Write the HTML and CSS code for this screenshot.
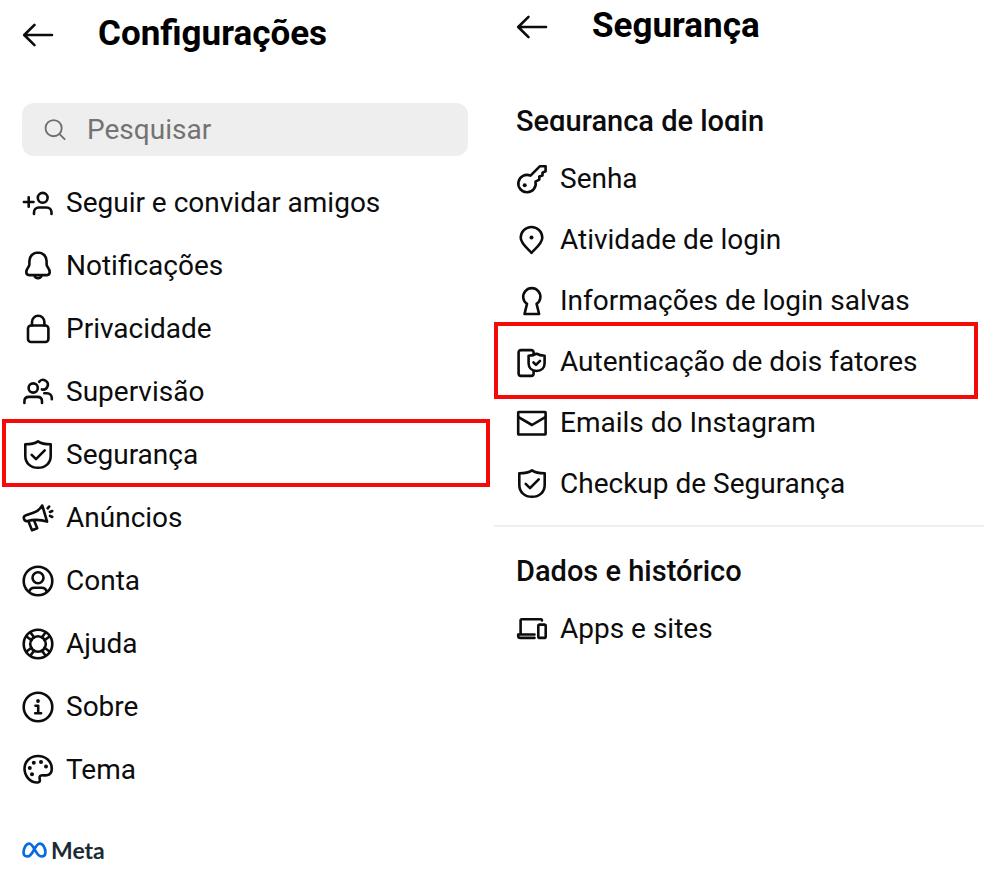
FILE: index.html
```
<!DOCTYPE html>
<html lang="pt-BR">
<head>
  <meta charset="utf-8">
  <meta name="viewport" content="width=device-width">
  <title>Configurações</title>
  <link rel="stylesheet" href="styles.css">
</head>
<body>
  <main class="screens">
    <section class="screen settings">
      <header class="screen-header">
        <button class="back" type="button" aria-label="Voltar">
          <svg class="icon" viewBox="0 0 32 32"><path d="M30 17H2.5M12.5 6.8L2.2 17l10.3 10.2"/></svg>
        </button>
        <h1>Configurações</h1>
      </header>

      <label class="search">
        <svg class="search-icon" viewBox="0 0 24 24"><circle cx="10.5" cy="10" r="8.8"/><path d="M17 16.5l5.500 5.500"/></svg>
        <input type="search" placeholder="Pesquisar" aria-label="Pesquisar">
      </label>

      <ul class="menu">
        <li><a href="#seguir">
          <svg class="icon" viewBox="0 0 32 32"><path d="M6.7 10.2v9.6M1.900 15h9.600"/><circle cx="20.7" cy="10.8" r="4.9"/><path d="M12 27v-1.500c0-3 2-5 5-5h7.500c3 0 5 2 5 5V27"/></svg>
          Seguir e convidar amigos
        </a></li>
        <li><a href="#notificacoes">
          <svg class="icon" viewBox="0 0 32 32"><path d="M16 2.500c-5 0-8.600 3.800-8.600 8.500v3.500c0 2.500-3.100 4-3.100 7.600 0 2 1 3 2.800 3h17.800c1.800 0 2.800-1 2.800-3 0-3.600-3.100-5.100-3.100-7.600V11c0-4.700-3.600-8.500-8.600-8.500z"/><path d="M12.500 25.500a3.600 3.600 0 0 0 7 0"/></svg>
          Notificações
        </a></li>
        <li><a href="#privacidade">
          <svg class="icon" viewBox="0 0 32 32"><rect x="6" y="12.5" width="20.4" height="16.5" rx="3"/><path d="M10 12.500V9a6.200 6.200 0 0 1 12.400 0v3.500"/></svg>
          Privacidade
        </a></li>
        <li><a href="#supervisao">
          <svg class="icon" viewBox="0 0 32 32"><circle cx="11.2" cy="12" r="4.6"/><path d="M2.400 27v-1.500c0-2.800 1.800-4.600 4.600-4.600h8.400c2.800 0 4.600 1.800 4.600 4.600V27M17.200 5.800a4.800 4.800 0 1 1 2.700 7.600M22.300 17.300H25c2.800 0 4.800 2 4.800 4.800v1.200"/></svg>
          Supervisão
        </a></li>
        <li class="highlight"><a href="#seguranca">
          <svg class="icon" viewBox="0 0 32 32"><path d="M16 2.300c2.800 1.900 7.600 3 12.700 3V17c0 7.200-5.400 11.800-12.700 11.800S3.300 24.200 3.300 17V5.300c5.100 0 9.900-1.100 12.700-3z"/><path d="M9.700 15.800l4.300 4.300 8.700-8.700"/></svg>
          Segurança
        </a></li>
        <li><a href="#anuncios">
          <svg class="icon" viewBox="0 0 32 32"><path d="M20.300 3.500c-2 3.500-5 6-9 7.300l-7.300 2.400c-2 .7-2.500 2-2 3.600.6 1.800 1.600 2.600 3.500 2.200 7-1.700 13-1.500 19.600.6L20.300 3.500z"/><path d="M6.500 19.500l3.500 8.700 5.200-2-3-7.500M25.700 6.300l1.400-1.700M28 10l2.200-1M28 13.800l2.200 1.200"/></svg>
          Anúncios
        </a></li>
        <li><a href="#conta">
          <svg class="icon" viewBox="0 0 32 32"><circle cx="16" cy="16" r="14.3"/><circle cx="16" cy="12.7" r="5.5"/><path d="M7.300 26.700c.6-2.600 2.400-4 5-4h7.400c2.600 0 4.400 1.400 5 4"/></svg>
          Conta
        </a></li>
        <li><a href="#ajuda">
          <svg class="icon" viewBox="0 0 32 32"><circle cx="16" cy="16" r="14.3"/><circle cx="16" cy="16" r="7.8"/><path d="M8.500 4.500l3.700 5M4.500 8.500l5 3.700M23.500 4.500l-3.700 5M27.500 8.500l-5 3.700M8.500 27.500l3.700-5M4.500 23.500l5-3.700M23.500 27.500l-3.700-5M27.500 23.500l-5-3.700"/></svg>
          Ajuda
        </a></li>
        <li><a href="#sobre">
          <svg class="icon" viewBox="0 0 32 32"><circle cx="16" cy="16" r="14.3"/><circle class="dot" cx="16" cy="10" r="1.9"/><path d="M13.500 14.700h2.700v7.300M13.200 22.200h5.900"/></svg>
          Sobre
        </a></li>
        <li><a href="#tema">
          <svg class="icon" viewBox="0 0 32 32"><path d="M16 2C8.500 2 2.500 7.200 2.500 14.500c0 7.600 5.600 13.800 12.500 14 2 .1 3.200-1 2.800-2.800-.4-2-.6-3.900 1.400-4.300 1.800-.4 3.400.3 5.600-.1 3.200-.6 5-3.400 5-6.800C29.800 7.200 23.500 2 16 2z"/><circle class="dot" cx="7.8" cy="14" r="2"/><circle class="dot" cx="11.8" cy="8.7" r="2"/><circle class="dot" cx="19" cy="8" r="2"/><circle class="dot" cx="24" cy="12.4" r="2"/><circle class="dot" cx="10" cy="20.2" r="2"/></svg>
          Tema
        </a></li>
      </ul>

      <footer class="meta">
        <svg class="meta-logo" viewBox="0 0 24 16"><path d="M1.500 10.800C1.500 5.800 4 1.800 7 1.800c4.200 0 6.500 12.400 11.500 12.400 2.600 0 4-1.600 4-4C22.500 5.800 20 1.800 17 1.800c-4.500 0-6.500 12.400-11.500 12.400-2.600 0-4-1.200-4-3.400z"/></svg>
        Meta
      </footer>
    </section>

    <section class="screen security">
      <header class="screen-header">
        <button class="back" type="button" aria-label="Voltar">
          <svg class="icon" viewBox="0 0 32 32"><path d="M30 17H2.500M12.500 6.800L2.200 17l10.300 10.200"/></svg>
        </button>
        <h1>Segurança</h1>
      </header>

      <h2 class="clipped">Segurança de login</h2>
      <ul class="menu">
        <li><a href="#senha">
          <svg class="icon" viewBox="0 0 32 32"><path d="M14.500 12.600L24 3.200h5.600v5l-3.100 1.400v3l-3.200 1v3l-3.800 2a8.700 8.700 0 1 1-5-6z"/><circle class="dot" cx="8.7" cy="22.3" r="2"/></svg>
          Senha
        </a></li>
        <li><a href="#atividade">
          <svg class="icon" viewBox="0 0 32 32"><path d="M15.500 28.800C12.500 25.400 4.700 19.500 4.700 13.800a10.800 10.800 0 0 1 21.600 0c0 5.700-7.800 11.600-10.800 15z"/><circle class="dot" cx="15.5" cy="13.5" r="2"/></svg>
          Atividade de login
        </a></li>
        <li><a href="#salvas">
          <svg class="icon" viewBox="0 0 32 32"><path d="M11 18.900L8.500 29h14.600l-2.500-10.100a8.600 8.600 0 1 0-9.600 0z"/></svg>
          Informações de login salvas
        </a></li>
        <li class="highlight"><a href="#dois-fatores">
          <svg class="icon" viewBox="0 0 32 32"><path d="M17.600 7.500v-1c0-1.500-1-2.400-2.400-2.400H5c-1.400 0-2.400.9-2.400 2.400v21c0 1.500 1 2.400 2.400 2.400h10.200c1.400 0 2.400-.9 2.400-2.400v-2"/><path d="M20.600 7.700c2 1.300 4.800 2 8 2.100v7.400c0 4.700-3.400 7.800-8 7.800s-8-3.100-8-7.800V9.800c3.200-.1 6-.8 8-2.100z"/><path d="M17.500 16.500l2.500 2.400 4-4"/></svg>
          Autenticação de dois fatores
        </a></li>
        <li><a href="#emails">
          <svg class="icon" viewBox="0 0 32 32"><rect x="2.2" y="5" width="27.4" height="22.5" rx=".5"/><path d="M2.500 10.200L16 18l13.300-7.800"/></svg>
          Emails do Instagram
        </a></li>
        <li><a href="#checkup">
          <svg class="icon" viewBox="0 0 32 32"><path d="M16 2.300c2.800 1.900 7.600 3 12.700 3V17c0 7.200-5.400 11.800-12.700 11.800S3.300 24.200 3.300 17V5.300c5.100 0 9.900-1.100 12.700-3z"/><path d="M9.700 15.800l4.300 4.300 8.700-8.700"/></svg>
          Checkup de Segurança
        </a></li>
      </ul>

      <hr>

      <h2>Dados e histórico</h2>
      <ul class="menu">
        <li><a href="#apps">
          <svg class="icon" viewBox="0 0 32 32"><path d="M4.600 21V7.500c0-.8.500-1.300 1.300-1.300h18.800c.8 0 1.300.5 1.300 1.300M18.500 21.500H2.200v1.200c0 1.300.8 2.200 2.100 2.200h14.200"/><rect x="22.3" y="11.6" width="7.4" height="13.3" rx="1.5"/></svg>
          Apps e sites
        </a></li>
      </ul>
    </section>
  </main>
</body>
</html>
```
FILE: styles.css
```
* {
  box-sizing: border-box;
}
body {
  margin: 0;
  background-color: #fff;
  color: #0c0c0c;
  font-family: Roboto, sans-serif;
  font-size: 28px;
  line-height: 32px;
}
.screens {
  display: grid;
  grid-template-columns: 1fr 1fr;
}
.settings {
  padding: 14px 24px 0 22px;
}
.security {
  padding: 6px 0 0 24px;
}
.screen-header {
  display: flex;
  align-items: center;
  height: 40px;
}
.back {
  display: flex;
  padding: 0;
  border: none;
  background: none;
  color: inherit;
  cursor: pointer;
}
h1 {
  margin: 0 0 0 44px;
  color: #000;
  font-size: 35px;
  font-weight: 700;
  line-height: 40px;
}
h2 {
  margin: 0;
  font-size: 29px;
  font-weight: 500;
}
.icon {
  flex: none;
  width: 32px;
  height: 32px;
  fill: none;
  stroke: currentColor;
  stroke-width: 2.6;
  stroke-linecap: round;
  stroke-linejoin: round;
}
.icon .dot {
  fill: currentColor;
  stroke: none;
}

.search {
  display: flex;
  align-items: center;
  gap: 21px;
  height: 53px;
  margin: 49px 0 15px;
  padding: 0 22px;
  border-radius: 12px;
  background-color: #eee;
  color: #6e6e6e;
}
.search-icon {
  flex: none;
  width: 22px;
  height: 22px;
  fill: none;
  stroke: currentColor;
  stroke-width: 2;
  stroke-linecap: round;
}
.search input {
  flex: 1;
  min-width: 0;
  padding: 0;
  border: none;
  outline: none;
  background: none;
  font: inherit;
}
.search input::placeholder {
  color: #737373;
}

.menu {
  margin: 0;
  padding: 0;
  list-style: none;
}
.menu li {
  position: relative;
}
.menu a {
  display: flex;
  align-items: center;
  gap: 12px;
  height: 63px;
  color: inherit;
  text-decoration: none;
  white-space: nowrap;
}
.security .menu a {
  height: 61px;
}

/* red frame drawn over the row */
.highlight::after {
  content: "";
  position: absolute;
  inset: -4px -22px -1px -20px;
  border: 4px solid #f50a0a;
  pointer-events: none;
}
.security .highlight::after {
  inset: -9px 6px -7px -22px;
}

.meta {
  display: flex;
  align-items: center;
  gap: 4px;
  margin-top: 33px;
  color: #1c2b33;
  font-family: Lato, sans-serif;
  font-size: 23px;
  font-weight: 700;
}
.meta-logo {
  width: 25px;
  height: 18px;
  fill: none;
  stroke: #0a6be0;
  stroke-width: 2.6;
}

/* the heading is half scrolled under the list */
.clipped {
  height: 26px;
  margin: 59px 0 17px;
  overflow: hidden;
}
hr {
  margin: 11px 0 28px -22px;
  border: none;
  border-top: 2px solid #efefef;
}
.security hr + h2 {
  margin-bottom: 11px;
}
```
